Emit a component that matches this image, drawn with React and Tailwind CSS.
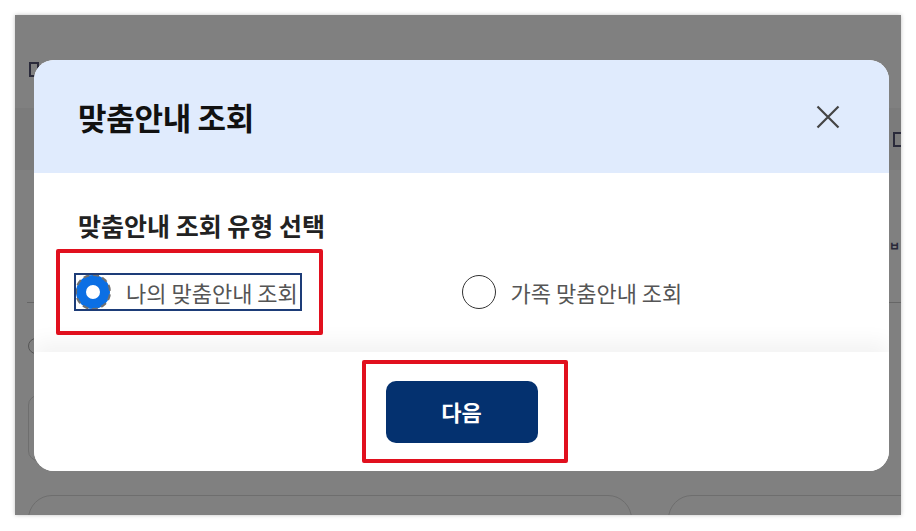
import React from "react";

function Box() {
  return <div className="w-[10px] h-[15px] border-2 border-[#2a2a3a]" />;
}

export default function App() {
  return (
    <div
      className="w-[916px] h-[531px] bg-white p-[15px]"
      style={{ fontFamily: '"Noto Sans CJK KR", "Noto Sans", sans-serif' }}
    >
      <div className="grid grid-cols-1 grid-rows-1 w-[886px] h-[500px] bg-[#808080] shadow-[0_0_4px_rgba(0,0,0,0.25)] overflow-hidden">
        {/* underlying page (dimmed by overlay) */}
        <div className="col-start-1 row-start-1 min-w-0 flex flex-col pt-[47px]">
          <div className="pl-[14px] h-[15px] flex">
            <Box />
          </div>
          <div className="mt-[31px] h-[62px] shrink-0 bg-[#7b7b7b] flex items-center justify-end">
            <div className="mr-[-2px]">
              <Box />
            </div>
          </div>
          <div className="mt-[70px] h-[20px] shrink-0 flex justify-end pr-[1px]">
            <span className="text-[12px] font-bold text-[#2a2a3a] leading-none">ㅂ</span>
          </div>
          <div className="mt-[42px] h-px shrink-0 flex justify-between pl-[12px]">
            <div className="w-[8px] h-px bg-[#666]" />
            <div className="w-[14px] h-px bg-[#666]" />
          </div>
          <div className="mt-[35px] pl-[13px] shrink-0 flex">
            <div className="w-[16px] h-[16px] rounded-full border border-[#555]" />
          </div>
          <div className="mt-[41px] pl-[13px] shrink-0 flex">
            <div className="w-[40px] h-[66px] rounded-[10px] border border-[#6e6e6e]" />
          </div>
          <div className="mt-[34px] pl-[13px] shrink-0 flex gap-[36px] overflow-hidden">
            <div className="w-[604px] shrink-0 h-[60px] rounded-[24px] border border-[#6e6e6e]" />
            <div className="w-[260px] shrink-0 h-[60px] rounded-[24px] border border-[#6e6e6e]" />
          </div>
        </div>

        {/* modal */}
        <div className="col-start-1 row-start-1 self-start ml-[19px] mt-[45px] relative w-[855px] h-[411px] bg-white rounded-[20px] overflow-hidden flex flex-col">
          <div className="h-[113px] shrink-0 bg-[#e0ebfd] pl-[44px] pr-[49px] flex items-center justify-between">
            <h2 className="text-[31px] font-bold text-[#111] leading-none tracking-[-0.3px]">맞춤안내 조회</h2>
            <svg width="24" height="24" viewBox="0 0 24 24" fill="none" stroke="#444" strokeWidth="2.2">
              <path d="M1.5 1.5 L22.5 22.5 M22.5 1.5 L1.5 22.5" />
            </svg>
          </div>

          <div className="flex-1 px-[44px] pt-[34px]">
            <h3 className="text-[25px] font-bold text-[#222] leading-[36px]">맞춤안내 조회 유형 선택</h3>
            <div className="grid grid-cols-2 mt-[32px]">
              <div className="flex">
                <label className="ml-[-2px] inline-flex items-center h-[34px] gap-[16px] outline-2 outline-[#1d3c78] pr-[2px]">
                  <span className="w-[34px] h-[34px] rounded-full border-[10px] border-[#0b6fe4] bg-white outline-2 outline-dashed outline-[#707070] outline-offset-[-1px]" />
                  <span className="text-[22px] text-[#555] leading-none">나의 맞춤안내 조회</span>
                </label>
              </div>
              <div className="flex">
                <label className="inline-flex items-center h-[34px] gap-[15px]">
                  <span className="w-[34px] h-[34px] rounded-full border border-[#333] bg-white" />
                  <span className="text-[22px] text-[#555] leading-none">가족 맞춤안내 조회</span>
                </label>
              </div>
            </div>
          </div>

          <div className="relative z-10 h-[119px] shrink-0 bg-white flex items-center justify-center shadow-[0_-10px_20px_rgba(0,0,0,0.05)]">
            <button className="w-[152px] h-[62px] rounded-[10px] bg-[#04316f] text-white text-[22px] font-bold">
              다음
            </button>
          </div>

          {/* annotation boxes drawn over the dialog */}
          <div className="absolute left-[22px] top-[189px] w-[267px] h-[86px] border-4 border-[#e1101e] rounded-[2px] z-20" />
          <div className="absolute left-[328px] top-[300px] w-[206px] h-[103px] border-4 border-[#e1101e] rounded-[2px] z-20" />
        </div>
      </div>
    </div>
  );
}
